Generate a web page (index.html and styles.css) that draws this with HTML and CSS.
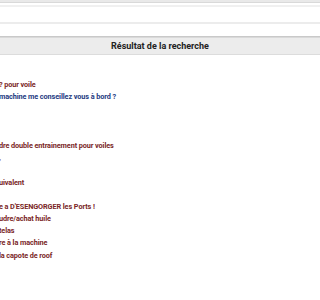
FILE: index.html
```html
<!DOCTYPE html>
<html>
  <head>
    <title>Recherche</title>
    <link rel="stylesheet" href="styles.css">
  </head>
  <body>
    <div class="topbar"></div>
    <div class="search">
      <div class="field"></div>
      <div class="field second"></div>
    </div>
    <div class="header">Résultat de la recherche</div>

    <ul class="results">
      <li class="spacer"></li>
      <li>? pour voile</li>
      <li class="visited">machine me conseillez vous à bord ?</li>
      <li></li>
      <li></li>
      <li></li>
      <li>dre double entrainement pour voiles</li>
      <li>,</li>
      <li></li>
      <li>uivalent</li>
      <li></li>
      <li>e a D'ESENGORGER les Ports !</li>
      <li>udre/achat huile</li>
      <li>telas</li>
      <li>re à la machine</li>
      <li>la capote de roof</li>
    </ul>
  </body>
</html>
```

FILE: styles.css
```css
body {
  margin: 0;
  font-family: Roboto, "Liberation Sans", sans-serif;
  background-color: #fff;
  overflow: hidden;
}

.topbar {
  height: 2px;
  background-color: #e9e9e9;
  border-bottom: 1px solid #d9d9d9;
}

.search {
  padding-top: 2px;
}

.field {
  height: 15px;
  border-top: 2px solid #f0f0f0;
  background-color: #fff;
}

.field.second {
  height: 12px;
  border-top: 2px solid #ececec;
}

.header {
  height: 17px;
  line-height: 18px;
  background-color: #ececec;
  border-top: 1px solid #c9c9c9;
  box-shadow: inset 0 1px 0 #d9d9d9;
  border-bottom: 1px solid #dcdcdc;
  text-align: center;
  font-size: 9px;
  font-weight: bold;
  color: #222;
}

.results {
  list-style: none;
  margin: 0;
  padding: 0;
}

.results li {
  height: 12.2px;
  line-height: 12px;
  font-size: 7.3px;
  font-weight: bold;
  letter-spacing: -0.1px;
  color: #7a2626;
  white-space: nowrap;
  margin-left: -1px;
}

.results li.spacer {
  height: 24px;
}

.results li.visited {
  color: #243a82;
}
```
